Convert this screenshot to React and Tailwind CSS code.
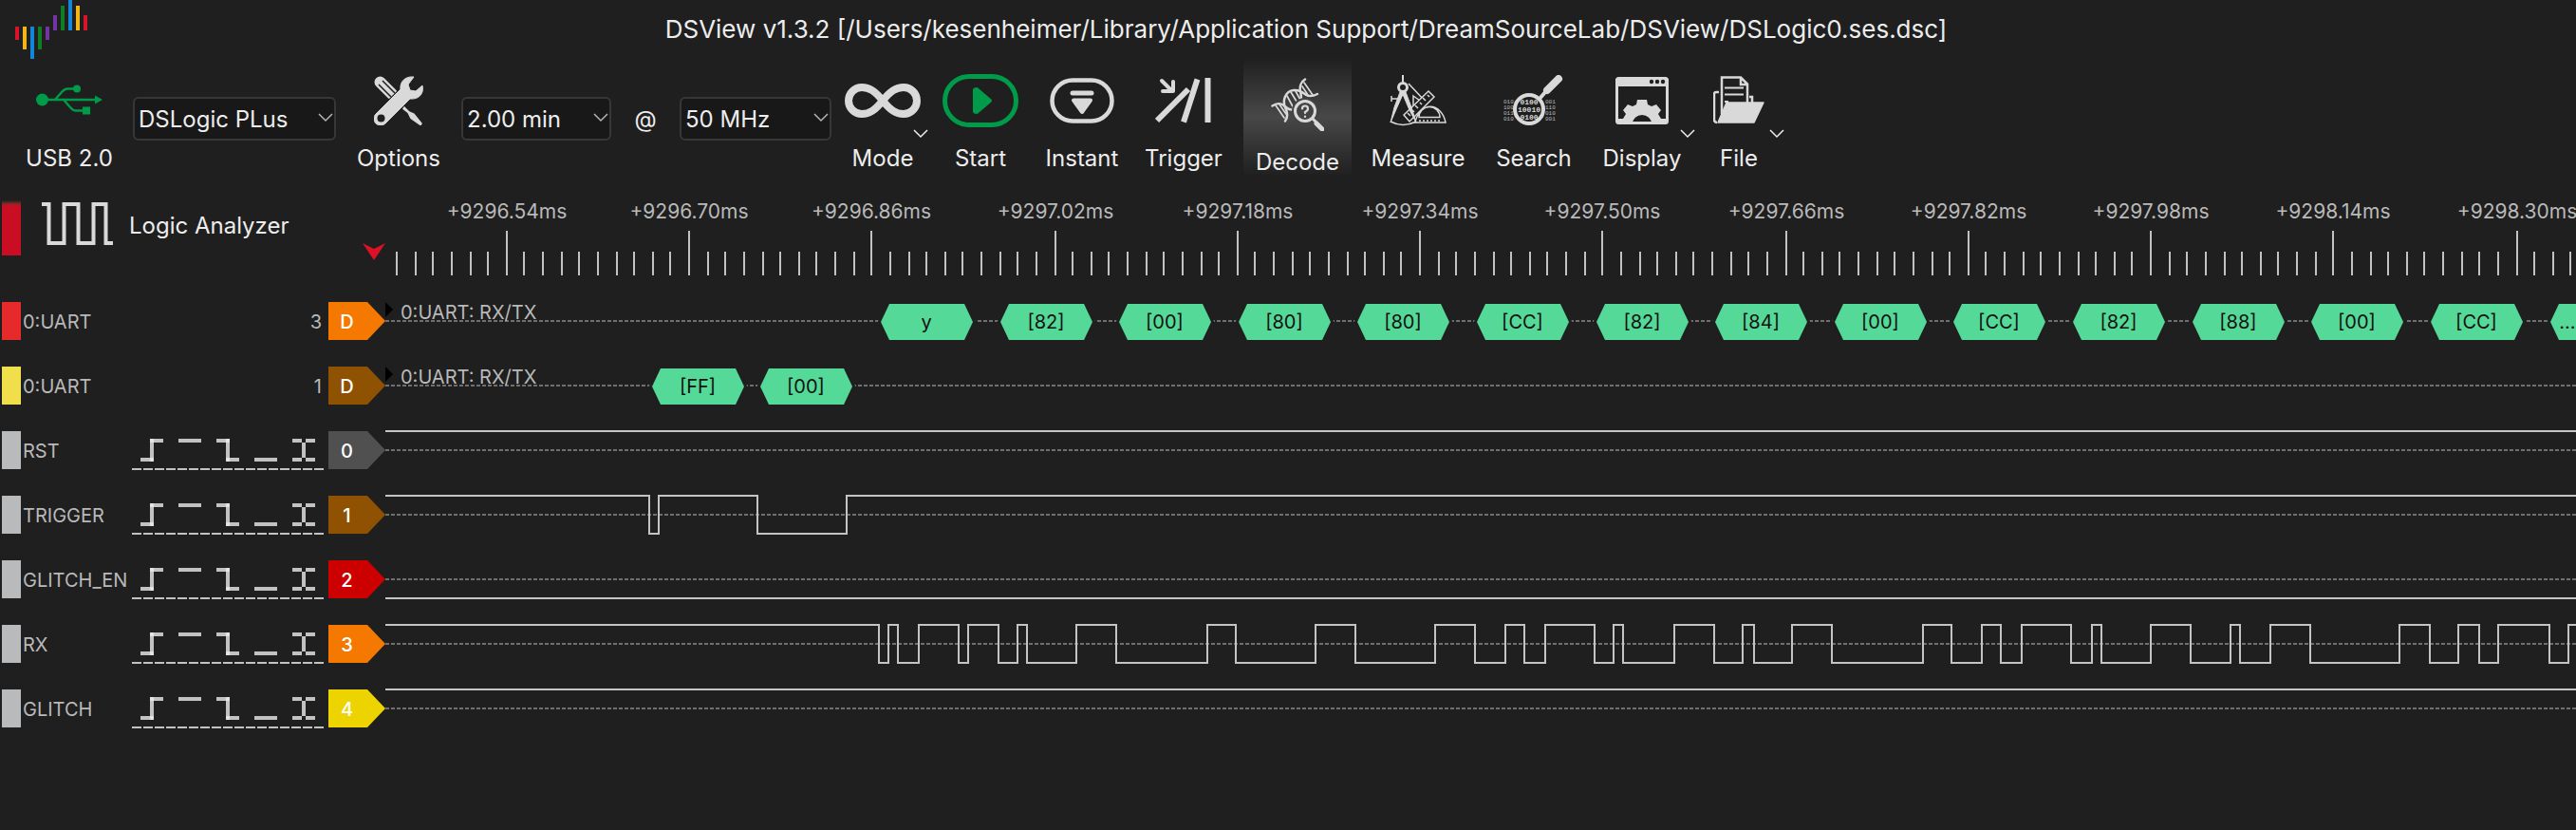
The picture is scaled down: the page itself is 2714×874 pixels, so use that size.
import React from "react";

const FG = "#d9d9d9";

const LOGO_BARS = [
  [0, 28, 14, "#d91329"],
  [8, 28, 24, "#f3b416"],
  [16, 28, 34, "#1287d9"],
  [24, 28, 24, "#0f7d22"],
  [32, 28, 14, "#7434a3"],
  [40, 16, 16, "#7434a3"],
  [48, 6, 26, "#0f7d22"],
  [56, 0, 32, "#1287d9"],
  [64, 6, 26, "#f3b416"],
  [72, 16, 16, "#d91329"],
];

function Logo() {
  return (
    <svg width="76" height="62" aria-hidden="true">
      {LOGO_BARS.map(([x, y, h, c]) => (
        <rect key={x} x={x} y={y} width="4" height={h} fill={c} />
      ))}
    </svg>
  );
}

function UsbIcon() {
  return (
    <svg width="70" height="34" viewBox="0 0 70 34" fill="none" stroke="#009b48" strokeWidth="2.500">
      <circle cx="6.500" cy="16" r="6.500" fill="#009b48" stroke="none" />
      <path d="M6 16h58M20 16L27 8q3-3.500 6-3.500h8M29 16l7 8q3 3.500 6 3.500h8" />
      <circle cx="43" cy="4.500" r="4" fill="#009b48" stroke="none" />
      <path d="M49 23.500h8v8h-8zM62 11.500l8 4.500-8 4.500z" fill="#009b48" stroke="none" />
    </svg>
  );
}

function OptionsIcon() {
  return (
    <svg width="52" height="52" viewBox="0 0 52 52" fill="none">
      <path d="M6.500 6.500L19 19" stroke={FG} strokeWidth="12" strokeLinecap="round" />
      <path d="M5 9l13 13M9 5l13 13" stroke="#1f1f1f" strokeWidth="1.500" />
      <path d="M14 26L26 14l6 6-12 12z" fill="#1f1f1f" />
      <path d="M32 33l5 5 5 2 8 10-1 1.500-10-7-3-6-5-4z" fill={FG} stroke={FG} strokeWidth="1.500" />
      <path
        d="M2 40L28 14C27 6 33 0 42 1L36 9 38 15 44 16 51 10C53 19 47 25 38 24L12 50A7 7 0 0 1 2 40z"
        fill={FG}
        stroke={FG}
        strokeLinejoin="round"
      />
      <circle cx="7.500" cy="44.500" r="4" fill="#1f1f1f" />
    </svg>
  );
}

function ModeIcon() {
  return (
    <svg width="80" height="36" viewBox="0 0 80 36" fill="none" stroke={FG} strokeWidth="8">
      <path d="M40 18C32 8 26 4 18 4A14 14 0 0 0 18 32C26 32 32 28 40 18C48 8 54 4 62 4A14 14 0 0 1 62 32C54 32 48 28 40 18z" />
    </svg>
  );
}

function StartIcon() {
  return (
    <svg width="80" height="56" viewBox="0 0 80 56" fill="none" stroke="#009b48">
      <rect x="2.500" y="2.500" width="75" height="51" rx="25.500" strokeWidth="5" />
      <path d="M34 16.500L36 16l14 12-14 12-2-.500z" fill="#009b48" strokeWidth="4" strokeLinejoin="round" />
    </svg>
  );
}

function InstantIcon() {
  return (
    <svg width="68" height="48" viewBox="0 0 68 48" fill="none" stroke={FG}>
      <rect x="2.500" y="2.500" width="63" height="43" rx="21.500" strokeWidth="4.500" />
      <path d="M24 16h20" strokeWidth="5" strokeLinecap="round" />
      <path d="M25 23.500h18L34 36z" fill={FG} strokeWidth="4" strokeLinejoin="round" />
    </svg>
  );
}

function TriggerIcon() {
  return (
    <svg width="60" height="48" viewBox="0 0 60 48" fill="none" stroke={FG}>
      <path d="M7 3l11 11M19 4v10H8" strokeWidth="4" strokeLinecap="round" strokeLinejoin="round" />
      <path d="M2 45L35 12M30 46.500L44.500 1.500M55.500 0v47" strokeWidth="6" />
    </svg>
  );
}

function DecodeIcon() {
  return (
    <svg width="56" height="56" viewBox="0 0 56 56" fill="none" stroke={FG} strokeWidth="2.500" strokeLinecap="round">
      <path d="M1.500 29.500C8 25 12 27 16 31C20 35 26 34 30 28C33 23 32 18 31 14C30 9 32 4 36 1.500" />
      <path d="M15 45.500C19 40 17 35 15 31C12 24 15 14 24 13C30 12.500 33 15 37 18C41 20 45 19 49 17" />
      <path d="M5 29l9 13M9 28l7 10M17 19l7 13M21 15l8 13M26 14l5 9M35 5l9 13M33 9l6 9" strokeWidth="1.700" />
      <circle cx="36" cy="35" r="14" fill="#444444" stroke="none" />
      <circle cx="36" cy="35" r="10.500" strokeWidth="3" />
      <path d="M44 43l3 3" strokeWidth="3" />
      <path d="M48 48l6 6" strokeWidth="5" />
      <path d="M33 32.500q0-3 3-3t3 3q0 2-3 3.500v1M36 40.500v.500" strokeWidth="2.200" />
    </svg>
  );
}

function MeasureIcon() {
  return (
    <svg width="60" height="54" viewBox="0 0 60 54" fill="none" stroke={FG} strokeWidth="1.500">
      <path d="M20 9L36 26M25 22l7 5-7 6zM2 22v6M2 25h8" />
      <path d="M27 50A16.500 22 0 0 1 59 50zM31 44.500a10 10 0 0 1 22 0z" />
      <path d="M32 49v-2M36 49v-2M40 49v-2M44 49v-2M48 49v-2M52 49v-2" />
      <path d="M15 42L41 17l6 6L21 49z" fill="#1f1f1f" />
      <path d="M22 43l-3-3M26 39l-2-2M30 35l-3-3M34 31l-2-2M38 27l-3-3M42 23l-2-2" />
      <path d="M14 0v8" strokeWidth="2" />
      <circle cx="14" cy="13" r="4.500" strokeWidth="3" />
      <path d="M11 18h4L7 36 1 50 5 34zM13 18h4l6 16 5 16-7-13z" fill={FG} strokeWidth="1" />
      <path d="M1 49Q14 56 28 49" />
    </svg>
  );
}

const BIT_ROWS = [
  ["010", "001"],
  ["100", "110"],
  ["011", "010"],
  ["010", "001"],
];

function SearchIcon() {
  return (
    <svg width="64" height="54" viewBox="0 0 64 54" fill="none">
      <g fill={FG} fontFamily="Liberation Mono" fontSize="6" opacity="0.8">
        {BIT_ROWS.map(([left, right], i) => (
          <g key={i}>
            <text x="0" y={30 + i * 6}>{left}</text>
            <text x="44" y={30 + i * 6}>{right}</text>
          </g>
        ))}
      </g>
      <circle cx="27" cy="36" r="15" fill="#1f1f1f" stroke={FG} strokeWidth="4" />
      <g fill={FG} fontFamily="Liberation Mono" fontSize="8" fontWeight="700" textAnchor="middle">
        <text x="27" y="31">0100</text>
        <text x="27" y="39">10010</text>
        <text x="27" y="47">0100</text>
      </g>
      <path d="M38 25l6-7" stroke={FG} strokeWidth="4" />
      <path d="M46 16L58 4" stroke={FG} strokeWidth="8" strokeLinecap="round" />
    </svg>
  );
}

function DisplayIcon() {
  return (
    <svg width="56" height="50" viewBox="0 0 56 50" fill="none">
      <rect x="1.500" y="1.500" width="53" height="47" rx="2" stroke={FG} strokeWidth="3" />
      <path d="M0 2h56v8H0z" fill={FG} />
      <g fill="#1f1f1f">
        <circle cx="38" cy="5" r="2.200" />
        <circle cx="44" cy="5" r="2.200" />
        <circle cx="50" cy="5" r="2.200" />
      </g>
      <path
        d="M2 49v-5h6l3-5-3-4 5-6 5 2 4-2 1-5h10l1 5 4 2 5-2 5 6-3 4 3 5h6v5H38a10 9 0 0 0-20 0z"
        fill={FG}
      />
    </svg>
  );
}

function FileIcon() {
  return (
    <svg width="54" height="52" viewBox="0 0 54 52" fill="none" stroke={FG} strokeWidth="2.500">
      <path d="M6 17H3q-2 0-2 2v27q0 3 3 3M9 40V1.500h20l7 7V28M29 2v7h7M38 22h3v6" />
      <path d="M12 12.500h20M12 19.500h20M12 27h4" strokeWidth="2" />
      <path d="M14 28h39L43 49H5z" fill={FG} strokeWidth="1.500" strokeLinejoin="round" />
    </svg>
  );
}

function Chevron({ className }) {
  return (
    <svg className={className} width="16" height="10" viewBox="0 0 16 10" fill="none" stroke="currentColor" strokeWidth="1.500">
      <path d="M1 1l7 7 7-7" />
    </svg>
  );
}

function ToolButton({ icon, label, className, menu, active }) {
  return (
    <button
      type="button"
      className={`relative flex h-[126px] shrink-0 flex-col items-center gap-[17px] ${className} ${
        active ? "mx-[14px] bg-linear-to-b from-[#1f1f1f] via-[#484848] to-[#1f1f1f] pt-5" : "pt-4"
      }`}
    >
      <span className="flex h-[60px] items-center">{icon}</span>
      <span className="whitespace-nowrap leading-7">{label}</span>
      {menu && <Chevron className={`absolute top-[76px] ${menu}`} />}
    </button>
  );
}

function Picker({ label, options, className }) {
  return (
    <div className={`relative mt-[42px] h-[46px] shrink-0 ${className}`}>
      <select
        aria-label={label}
        className="h-full w-full appearance-none rounded-md border-2 border-[#373737] bg-[#181818] pl-1 pt-[2px] text-[#ededed] outline-none"
      >
        {options.map((o) => (
          <option key={o}>{o}</option>
        ))}
      </select>
      <Chevron className="pointer-events-none absolute right-[3px] top-[17px] text-[#b4b4b4]" />
    </div>
  );
}

function Toolbar() {
  return (
    <div className="flex h-[130px] items-start pl-[6px]" role="toolbar" aria-label="Main">
      <ToolButton icon={<UsbIcon />} label="USB 2.0" className="w-[134px]" />
      <Picker label="Device" options={["DSLogic PLus"]} className="w-[214px]" />
      <ToolButton icon={<OptionsIcon />} label="Options" className="w-[132px]" />
      <Picker label="Duration" options={["2.00 min"]} className="w-[158px]" />
      <span className="mt-[52px] w-[72px] shrink-0 text-center leading-7">@</span>
      <Picker label="Sample rate" options={["50 MHz"]} className="w-[160px]" />
      <ToolButton icon={<ModeIcon />} label="Mode" className="w-[108px]" menu="right-[6px]" />
      <ToolButton icon={<StartIcon />} label="Start" className="w-[98px]" />
      <ToolButton icon={<InstantIcon />} label="Instant" className="w-[116px]" />
      <ToolButton icon={<TriggerIcon />} label="Trigger" className="w-[98px]" />
      <ToolButton icon={<DecodeIcon />} label="Decode" className="w-[114px]" active />
      <ToolButton icon={<MeasureIcon />} label="Measure" className="w-[112px]" />
      <ToolButton icon={<SearchIcon />} label="Search" className="w-[132px]" />
      <ToolButton icon={<DisplayIcon />} label="Display" className="w-[96px]" menu="right-[-8px]" />
      <ToolButton icon={<FileIcon />} label="File" className="w-[108px]" menu="right-[6px]" />
    </div>
  );
}

const TIMES = [
  "+9296.54ms", "+9296.70ms", "+9296.86ms", "+9297.02ms", "+9297.18ms", "+9297.34ms",
  "+9297.50ms", "+9297.66ms", "+9297.82ms", "+9297.98ms", "+9298.14ms", "+9298.30ms",
];
const tickX = (k) => 2 * Math.round((127.6 + 19.25 * k) / 2);

function Ruler() {
  return (
    <svg className="h-[100px] w-full" role="img" aria-label="Time ruler">
      {Array.from({ length: 126 }, (_, i) => i - 6).map((k) => (
        <rect key={k} x={tickX(k) - 1} y={k % 10 === 0 ? 53 : 75} width="2" height={k % 10 === 0 ? 47 : 25} fill="#c2c2c2" />
      ))}
      {TIMES.map((t, i) => (
        <text key={t} x={tickX(i * 10)} y="40" textAnchor="middle" fontSize="21" fill="#b9b9b9">{t}</text>
      ))}
    </svg>
  );
}

function AnalyzerHeader() {
  return (
    <div className="flex h-[114px] items-start">
      <div className="flex h-full w-[406px] shrink-0 items-start pl-[2px]">
        <span className="mt-[21px] h-[58px] w-5 bg-linear-to-b from-[#1f1f1f] via-[#c90d22] via-10% to-[#c90d22] to-90%" />
        <svg className="ml-[22px] mt-[23px]" width="75" height="46" fill="none" stroke={FG} strokeWidth="4">
          <path d="M0 2h7.500v41h16V2h15v41h16V2h13v41H75" />
        </svg>
        <span className="ml-[17px] mt-[34px] whitespace-nowrap leading-7">Logic Analyzer</span>
        <svg className="ml-auto mt-[66px]" width="24" height="19" fill="#dd1126">
          <path d="M0 0l12 6 12-6-12 18z" />
        </svg>
      </div>
      <div className="min-w-0 flex-1">
        <Ruler />
      </div>
    </div>
  );
}

const EDGE_GLYPHS = [
  ["Rising edge", "M0 20h14v4H0zM10 0h4v24h-4zM10 0h14v4H10z", "M10 0h4v4h-4zM10 20h4v4h-4z"],
  ["High level", "M0 0h24v4H0z", ""],
  ["Falling edge", "M0 0h14v4H0zM10 0h4v24h-4zM10 20h14v4H10z", "M10 0h4v4h-4zM10 20h4v4h-4z"],
  ["Low level", "M0 20h24v4H0z", ""],
  ["Either edge", "M0 0h10v4H0zM14 0h10v4H14zM10 4h4v16h-4zM0 20h10v4H0zM14 20h10v4H14z", ""],
];

function Controls({ row }) {
  return (
    <div className="ml-[5px] flex h-[42px] w-[202px] shrink-0 flex-col">
      {row.decoder ? (
        <span className="flex-1 pr-[2px] text-right text-[20px] leading-[44px]">{row.source}</span>
      ) : (
        <div className="flex flex-1 gap-4 pl-[9px] pt-[9px]">
          {EDGE_GLYPHS.map(([name, d, joints]) => (
            <button key={name} type="button" aria-label={name} className="h-6 w-6">
              <svg width="24" height="24">
                <path d={d} fill="#c2c2c2" />
                <path d={joints} fill="#e4e4e4" />
              </svg>
            </button>
          ))}
        </div>
      )}
      <svg className="h-[2px] w-full">
        <path d="M0 1h202" stroke="#c2c2c2" strokeWidth="2" strokeDasharray="10 2" />
      </svg>
    </div>
  );
}

const bytes = ["y", "[82]", "[00]", "[80]", "[80]", "[CC]", "[82]", "[84]", "[00]", "[CC]", "[82]", "[88]", "[00]", "[CC]"];

const RX_EDGES = [
  520, 530, 540, 562, 604, 614, 646, 666, 676, 728, 770, 866, 896, 980, 1022, 1106, 1148, 1180, 1200, 1222, 1274,
  1294, 1304, 1358, 1400, 1430, 1442, 1482, 1524, 1620, 1650, 1682, 1702, 1724, 1776, 1798, 1808, 1860, 1902, 1944,
  1954, 1986, 2028, 2122, 2154, 2184, 2206, 2226, 2280, 2300,
];

const ROWS = [
  {
    id: "d3", name: "0:UART", block: "bg-[#e62a2c]", tag: "D", tagColor: "bg-[#f57900]", decoder: true, source: "3",
    frames: [...bytes.map((text, k) => ({ x: Math.round(522 + 125.6 * k), text })), { x: 2281, text: "...", textX: 2299 }],
  },
  {
    id: "d1", name: "0:UART", block: "bg-[#f0de4b]", tag: "D", tagColor: "bg-[#8f5202]", decoder: true, source: "1",
    frames: [{ x: 281, text: "[FF]" }, { x: 395, text: "[00]" }],
  },
  { id: "c0", name: "RST", block: "bg-[#b8babc]", tag: "0", tagColor: "bg-[#505050]", start: 1, edges: [] },
  { id: "c1", name: "TRIGGER", block: "bg-[#b8babc]", tag: "1", tagColor: "bg-[#8f5202]", start: 1, edges: [278, 288, 392, 486] },
  { id: "c2", name: "GLITCH_EN", block: "bg-[#b8babc]", tag: "2", tagColor: "bg-[#cc0000]", start: 0, edges: [] },
  { id: "c3", name: "RX", block: "bg-[#b8babc]", tag: "3", tagColor: "bg-[#f57900]", start: 1, edges: RX_EDGES },
  { id: "c4", name: "GLITCH", block: "bg-[#b8babc]", tag: "4", tagColor: "bg-[#edd400]", start: 1, edges: [] },
];

function wavePath(start, edges) {
  let level = start;
  let d = `M0 ${level ? 14 : 54}`;
  edges.forEach((x) => {
    level = 1 - level;
    d += `H${x}V${level ? 14 : 54}`;
  });
  return d + "H8000";
}

function Track({ row }) {
  return (
    <svg className="h-[68px] min-w-0 flex-1" role="img" aria-label={`${row.name} trace`}>
      <path d="M0 34H8000" stroke="#6f6f6f" strokeWidth="2" strokeDasharray="4 2" />
      {row.decoder ? (
        <>
          <path d="M0 14l8 8-8 8z" fill="#000000" />
          <text x="16" y="32" fontSize="20" fill="#b9b9b9">0:UART: RX/TX</text>
          {row.frames.map((f) => (
            <g key={f.x}>
              <path d={`M${f.x} 35l9-19h79l9 19-9 19h-79z`} fill="#55d998" stroke="#1f1f1f" strokeWidth="6" paintOrder="stroke" />
              <text x={f.textX || f.x + 48} y="42" fontSize="20" textAnchor="middle" fill="#111111">{f.text}</text>
            </g>
          ))}
        </>
      ) : (
        <path d={wavePath(row.start, row.edges)} fill="none" stroke="#c4c4c4" strokeWidth="2" strokeLinejoin="miter" />
      )}
    </svg>
  );
}

function SignalRow({ row }) {
  return (
    <div className="flex h-[68px] items-center pl-[2px]">
      <span className={`h-10 w-5 shrink-0 ${row.block}`} />
      <span className="ml-[2px] w-[110px] shrink-0 overflow-hidden whitespace-nowrap pt-[2px] text-[20px] leading-7">{row.name}</span>
      <Controls row={row} />
      <button
        type="button"
        className={`ml-[5px] h-10 w-[60px] shrink-0 pr-[21px] pt-[2px] text-center text-[20px] font-medium text-white [clip-path:polygon(0_0,41px_0,60px_50%,41px_100%,0_100%)] ${row.tagColor}`}
      >
        {row.tag}
      </button>
      <Track row={row} />
    </div>
  );
}

export default function App() {
  return (
    <div className="min-h-screen overflow-hidden bg-[#1f1f1f] font-['Inter',sans-serif] text-[24px] text-[#ededed]">
      <header className="flex h-[60px] items-start pl-4 pr-[54px]">
        <Logo />
        <h1 className="min-w-0 flex-1 pt-[17px] text-center text-[26px] leading-7">
          DSView v1.3.2 [/Users/kesenheimer/Library/Application Support/DreamSourceLab/DSView/DSLogic0.ses.dsc]
        </h1>
      </header>
      <Toolbar />
      <main>
        <AnalyzerHeader />
        <div className="text-[#b9b9b9]">
          {ROWS.map((row) => (
            <SignalRow key={row.id} row={row} />
          ))}
        </div>
      </main>
    </div>
  );
}
